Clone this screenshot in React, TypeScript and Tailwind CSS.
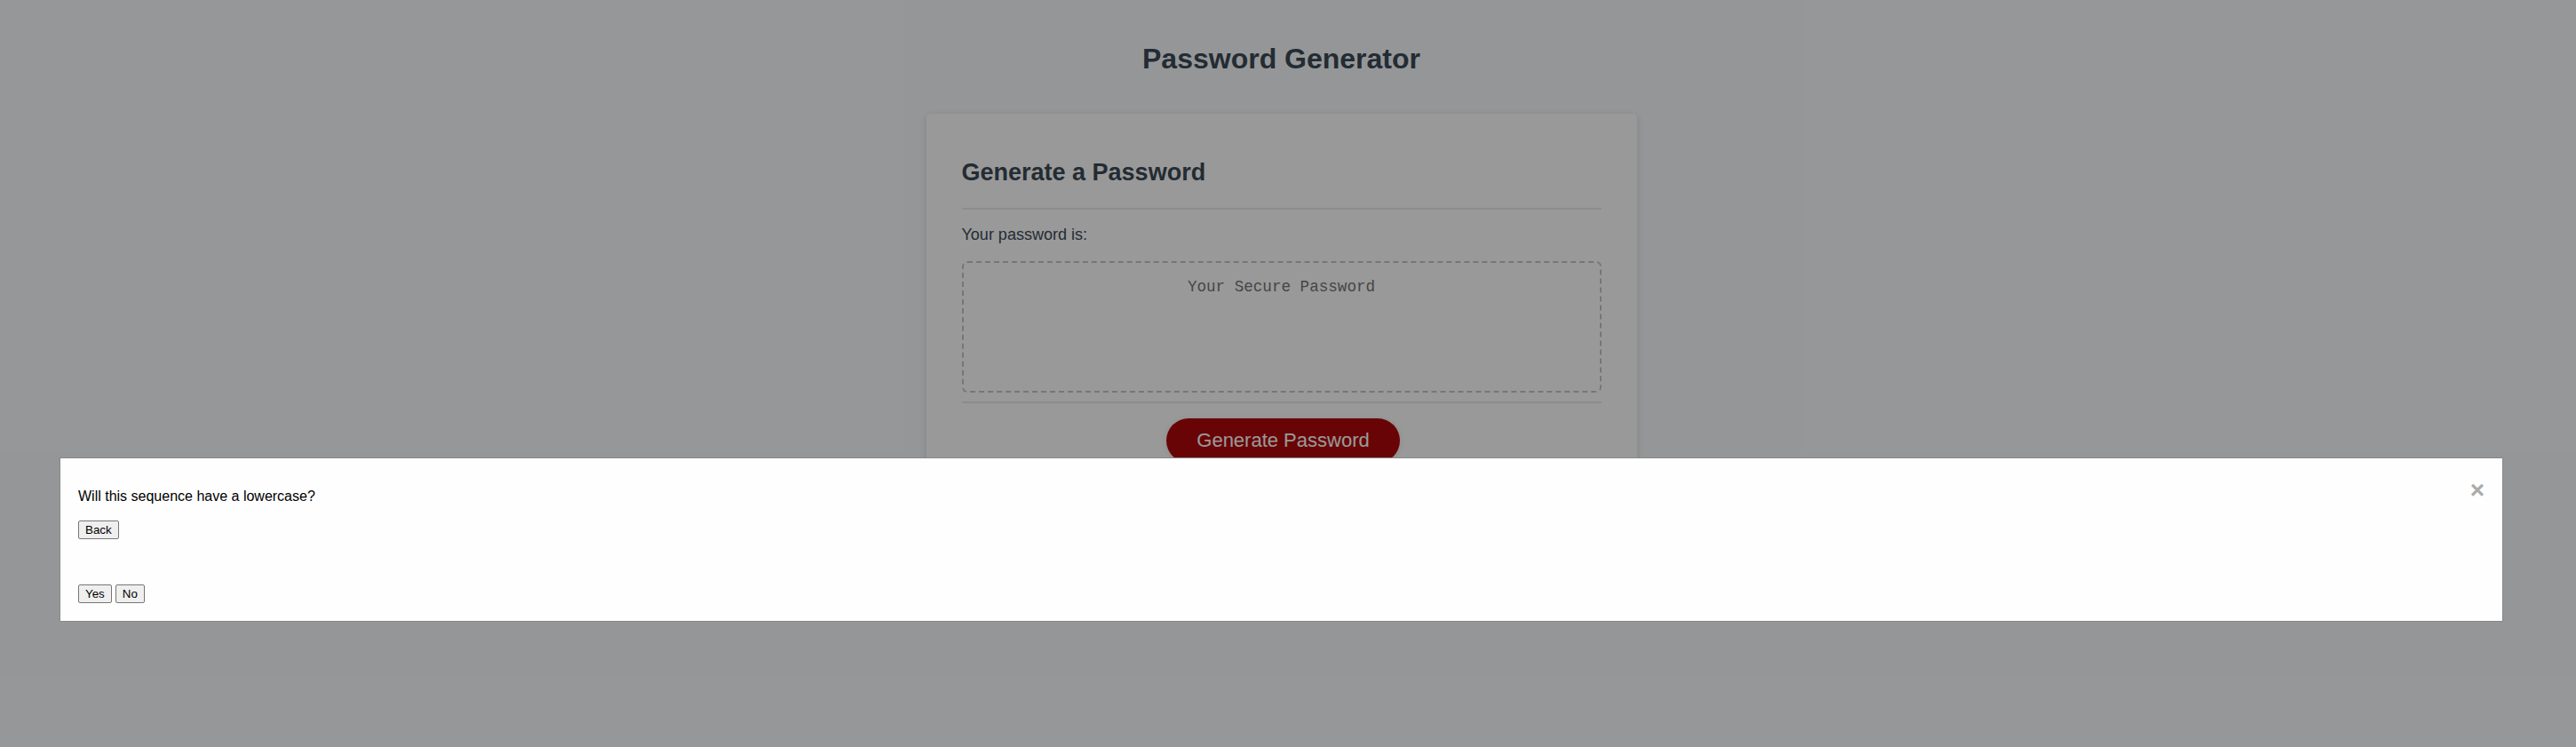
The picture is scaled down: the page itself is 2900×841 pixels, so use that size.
const textColor = "text-[#3b4a56]";

function Header() {
  return (
    <header className={`px-5 pb-5 text-center ${textColor}`}>
      <h1 className="mt-[18px] mb-[23px] text-[32px] font-bold leading-[37px]">Password Generator</h1>
    </header>
  );
}

function Card() {
  return (
    <div
      className={`mx-auto max-w-[800px] rounded-[5px] bg-white px-10 py-[30px] text-[18px] ${textColor} shadow-[0_2px_8px_0_rgba(0,0,0,0.15)]`}
    >
      <div>
        <h2 className="mt-[21px] mb-[24px] text-[27px] font-bold leading-[31px]">Generate a Password</h2>
        <div className="h-[2px] w-full bg-[#e7e9eb]" />
      </div>
      <div className="min-h-[100px]">
        <p className="mt-[18px] mb-[19px] leading-[21px]">Your password is:</p>
        <textarea
          readOnly
          aria-label="Generated Password"
          placeholder="Your Secure Password"
          className="block h-[148px] w-full resize-none overflow-hidden rounded-[6px] border-2 border-dashed border-[#c0c7cf] px-[15px] pt-[16px] pb-[85px] text-center font-['Liberation_Mono',monospace] text-[17.6px] leading-[22px] placeholder:text-[#757575]"
        />
      </div>
      <div className="mt-[10px] text-center">
        <div className="h-[2px] w-full bg-[#e7e9eb]" />
        <button className="mt-[17px] mr-4 mb-4 ml-5 inline-block rounded-[25px] bg-[#b0080a] px-[34px] py-[14px] text-[22px] leading-[22px] text-white shadow-[0_1px_6px_0_rgba(0,0,0,0.1)]">
          Generate Password
        </button>
      </div>
    </div>
  );
}

function NativeButton({ label }: { label: string }) {
  return (
    <button className="h-[21px] rounded-[2px] border border-[#767676] bg-[#efefef] px-[7px] text-[13.33px] leading-[15px] text-black">
      {label}
    </button>
  );
}

function PromptModal() {
  return (
    <div className="absolute top-[515px] left-[67px] w-[2751px] border border-[#888] bg-[#fefefe] p-5 text-black">
      <span className="float-right cursor-pointer text-[28px] font-bold leading-[32px] text-[#aaaaaa]">×</span>
      <p className="mt-[14px] mb-[18px] text-[16px] leading-[18px]">Will this sequence have a lowercase?</p>
      <div className="flex">
        <NativeButton label="Back" />
      </div>
      <div className="mt-[51px] flex gap-1">
        <NativeButton label="Yes" />
        <NativeButton label="No" />
      </div>
    </div>
  );
}

export default function App() {
  return (
    <div className="relative h-[841px] w-full overflow-hidden bg-[#f9fbfd] font-['Liberation_Sans',Arial,sans-serif]">
      <div className="w-[2885px] px-5 pt-[30px]">
        <Header />
        <Card />
      </div>
      <div className="absolute inset-0 bg-black/40" />
      <PromptModal />
    </div>
  );
}
